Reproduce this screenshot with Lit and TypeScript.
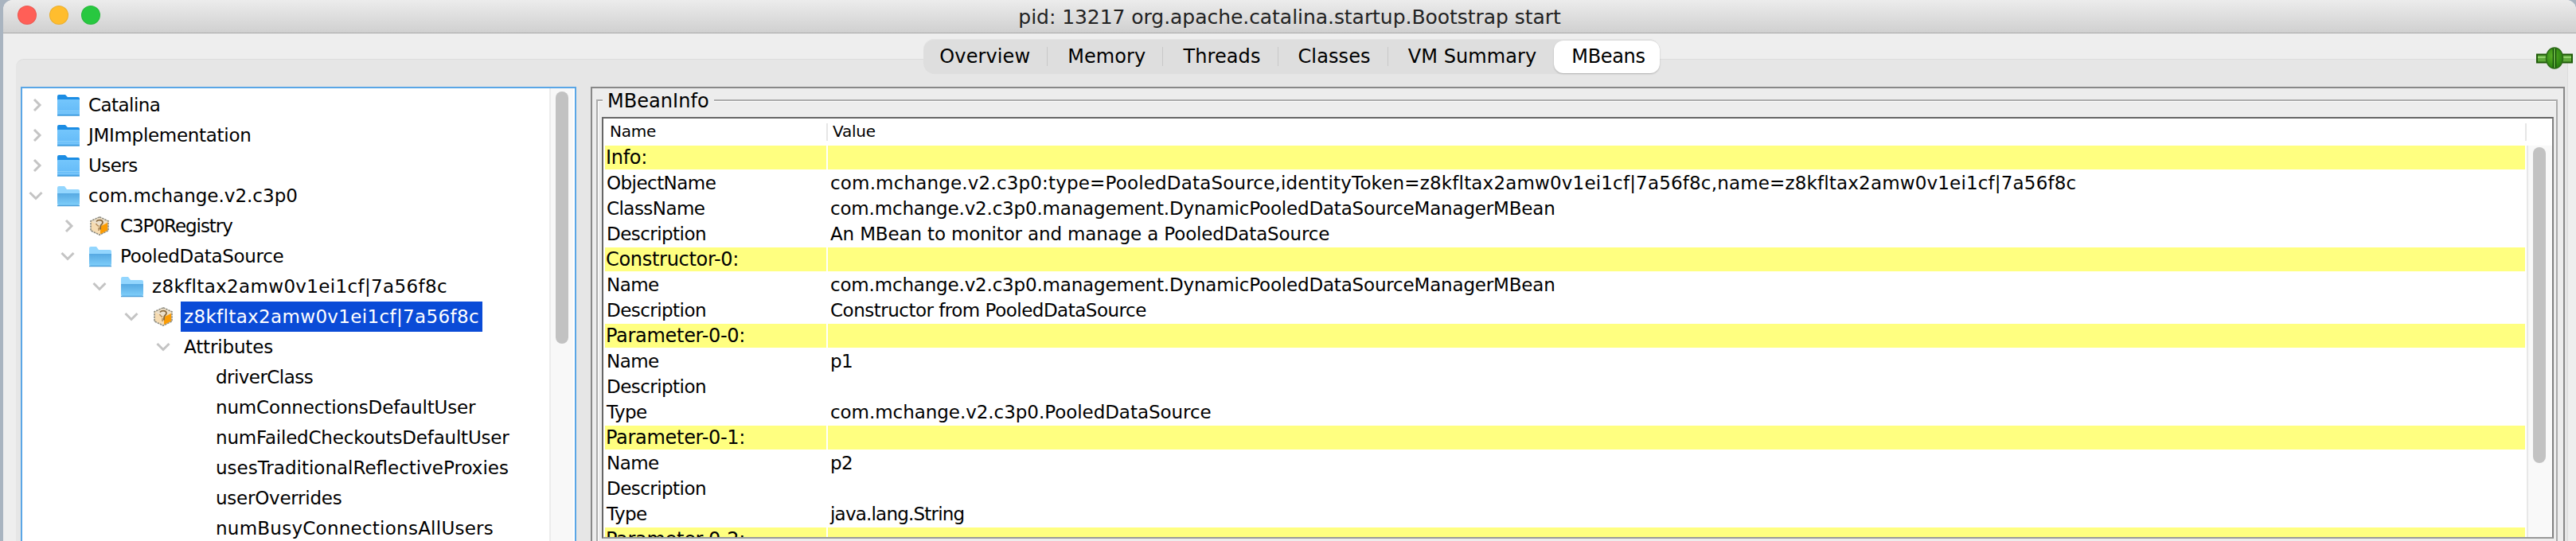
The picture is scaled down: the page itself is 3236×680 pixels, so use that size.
import { LitElement, html, css, svg } from 'lit';
import { customElement } from 'lit/decorators.js';
import { classMap } from 'lit/directives/class-map.js';

// ls = letter-spacing in px, the fallback font's widths differ from the original's per string
type TreeNode = { level: number; label: string; ls: number; twist?: 'open' | 'closed'; icon?: 'folder' | 'folder-open' | 'bean'; selected?: boolean };
type InfoRow = { name: string; value?: string; ls?: number };

const HASH = 'z8kfltax2amw0v1ei1cf|7a56f8c';

const TREE: TreeNode[] = [
  { level: 0, label: 'Catalina', ls: -0.55, twist: 'closed', icon: 'folder' },
  { level: 0, label: 'JMImplementation', ls: -0.3, twist: 'closed', icon: 'folder' },
  { level: 0, label: 'Users', ls: -0.55, twist: 'closed', icon: 'folder' },
  { level: 0, label: 'com.mchange.v2.c3p0', ls: 0, twist: 'open', icon: 'folder-open' },
  { level: 1, label: 'C3P0Registry', ls: -1.05, twist: 'closed', icon: 'bean' },
  { level: 1, label: 'PooledDataSource', ls: -0.3, twist: 'open', icon: 'folder-open' },
  { level: 2, label: HASH, ls: 0.35, twist: 'open', icon: 'folder-open' },
  { level: 3, label: HASH, ls: 0.35, twist: 'open', icon: 'bean', selected: true },
  { level: 4, label: 'Attributes', ls: -0.15, twist: 'open' },
  { level: 5, label: 'driverClass', ls: -0.55 },
  { level: 5, label: 'numConnectionsDefaultUser', ls: -0.15 },
  { level: 5, label: 'numFailedCheckoutsDefaultUser', ls: -0.2 },
  { level: 5, label: 'usesTraditionalReflectiveProxies', ls: 0 },
  { level: 5, label: 'userOverrides', ls: -0.25 },
  { level: 5, label: 'numBusyConnectionsAllUsers', ls: 0.25 },
];

const INFO: InfoRow[] = [
  { name: 'Info:' },
  { name: 'ObjectName', value: `com.mchange.v2.c3p0:type=PooledDataSource,identityToken=${HASH},name=${HASH}`, ls: 0.17 },
  { name: 'ClassName', value: 'com.mchange.v2.c3p0.management.DynamicPooledDataSourceManagerMBean', ls: -0.18 },
  { name: 'Description', value: 'An MBean to monitor and manage a PooledDataSource', ls: -0.15 },
  { name: 'Constructor-0:' },
  { name: 'Name', value: 'com.mchange.v2.c3p0.management.DynamicPooledDataSourceManagerMBean', ls: -0.18 },
  { name: 'Description', value: 'Constructor from PooledDataSource', ls: -0.5 },
  { name: 'Parameter-0-0:' },
  { name: 'Name', value: 'p1' },
  { name: 'Description', value: '' },
  { name: 'Type', value: 'com.mchange.v2.c3p0.PooledDataSource', ls: -0.05 },
  { name: 'Parameter-0-1:' },
  { name: 'Name', value: 'p2' },
  { name: 'Description', value: '' },
  { name: 'Type', value: 'java.lang.String', ls: -0.8 },
  { name: 'Parameter-0-2:' },
];

const TABS = ['Overview', 'Memory', 'Threads', 'Classes', 'VM Summary', 'MBeans'];

const chevronClosed = html`<svg class="chev" width="18" height="20" viewBox="0 0 18 20"><path d="M5 3l7 7-7 7" fill="none" stroke="#c4c4c4" stroke-width="3"/></svg>`;
const chevronOpen = html`<svg class="chev open" width="18" height="20" viewBox="0 0 18 20"><path d="M1.5 6l7.5 7.500 7.500-7.500" fill="none" stroke="#c4c4c4" stroke-width="3"/></svg>`;

const folderClosed = html`<svg width="30" height="28" viewBox="0 0 30 28">
  <defs><linearGradient id="fc" x1="0" y1="0" x2="0" y2="1"><stop offset="0" stop-color="#74c6fc"/><stop offset="1" stop-color="#62b9f7"/></linearGradient></defs>
  <path d="M1 3a2 2 0 0 1 2-2h8l3 3h13a2 2 0 0 1 2 2v5H1z" fill="#1c8de4"/>
  <rect x="1" y="7" width="28" height="20" rx="1" fill="url(#fc)"/>
  <path d="M1 21.500h28M1 24h28" stroke="#8ad0fb" stroke-width="1"/>
  <path d="M1 27h28" stroke="#3d98d8" stroke-width="1.500"/>
</svg>`;

const folderOpen = html`<svg width="30" height="28" viewBox="0 0 30 28">
  <defs><linearGradient id="fo" x1="0" y1="0" x2="0" y2="1"><stop offset="0" stop-color="#56a9e2"/><stop offset="1" stop-color="#7fcefa"/></linearGradient></defs>
  <path d="M1 4a2 2 0 0 1 2-2h7l3 4h14a2 2 0 0 1 2 2v8H1z" fill="#93d6fe"/>
  <path d="M1 11h28v13a2 2 0 0 1-2 2H3a2 2 0 0 1-2-2z" fill="url(#fo)"/>
  <path d="M1 26.500h28" stroke="#4c9fd8" stroke-width="1.500"/>
</svg>`;

const beanIcon = html`<svg class="bean" width="26" height="24" viewBox="0 0 26 24">
  <path d="M13 .8l11 5v12l-11 5.400-11-5.400v-12z" fill="#f6dcb2" stroke="#8a8a80" stroke-width="1.600" stroke-dasharray="2.500 1"/>
  <path d="M3 6.500L13 1.800l10 4.700-10 5z" fill="#ece0cc"/>
  <path d="M14 12.500l9-4.500v9.500l-9 4.700z" fill="#fb9c04"/>
  <path d="M9 6.500c2-2.500 7-2.500 8 .5 .5 2-1.500 3-2.500 4.500-.7 1.200-.5 3.500-.5 5" fill="none" stroke="#8a6a3c" stroke-width="1.800"/>
  <path d="M8.500 9c1 2 2.500 3 3.500 3.500M12 14v4" fill="none" stroke="#b08a5a" stroke-width="1.500"/>
</svg>`;

const connectIcon = svg`
  <defs><radialGradient id="ball" cx=".4" cy=".4" r=".7"><stop offset="0" stop-color="#5cb028"/><stop offset="1" stop-color="#1f7a0a"/></radialGradient></defs>
  <rect x="1" y="9.500" width="44" height="10" fill="#5fa83a" stroke="#1e5a08" stroke-width="2"/>
  <path d="M2 13h42" stroke="#8fd06a" stroke-width="2"/>
  <ellipse cx="23" cy="14" rx="10.500" ry="13" fill="url(#ball)" stroke="#2d6a18" stroke-width="1.500"/>
  <path d="M21.500 2v24M24.500 2v24" stroke="#0f4a04" stroke-width="1.500"/>
  <path d="M23 2v24" stroke="#8fd06a" stroke-width="1"/>
`;

@customElement('app-root')
export class AppRoot extends LitElement {
  static styles = css`
    :host {
      display: block;
      height: 680px;
      overflow: hidden;
      background: #a9b4c0;
      font-family: "DejaVu Sans", sans-serif;
      color: #000;
    }
    .window {
      margin-left: 4px;
      height: 680px;
      background: #eeeeee;
      border-radius: 12px 12px 0 0;
      display: flex;
      flex-direction: column;
      overflow: hidden;
    }
    .titlebar {
      flex: 0 0 41px;
      display: flex;
      align-items: center;
      justify-content: center;
      background: linear-gradient(#ececec, #d0d0d0);
      border-bottom: 1px solid #a9a9a9;
      position: relative;
    }
    .title {
      font-size: 25px;
      letter-spacing: -0.05px;
      color: #222;
      transform: translateY(1px);
    }
    .lights {
      position: absolute;
      left: 18px;
      top: 7px;
      display: flex;
      gap: 16px;
    }
    .lights i {
      width: 24px;
      height: 24px;
      border-radius: 50%;
      box-sizing: border-box;
      border: 1px solid rgba(0, 0, 0, 0.08);
    }
    .red { background: #ff5f57; }
    .amber { background: #ffbd2e; }
    .green { background: #28c840; }
    .tabline {
      display: grid;
      grid-template-columns: 1fr auto 1fr;
      align-items: center;
      height: 44px;
      margin: 7px 0 -19px;
      padding-left: 5px;
      position: relative;
      z-index: 1;
    }
    .tabs {
      grid-column: 2;
      display: flex;
      align-items: center;
      height: 44px;
      border-radius: 14px;
      background: #dedede;
      box-shadow: inset 0 1px 0 #e4e4e4;
    }
    .tab {
      font-size: 24px;
      letter-spacing: 0.1px;
      height: 44px;
      line-height: 44px;
      padding: 0 22px 0 25px;
      position: relative;
    }
    .tab:first-child { padding-left: 20px; }
    .tab:not(.on):not(:nth-last-child(2))::after {
      content: "";
      position: absolute;
      right: 0;
      top: 10px;
      height: 24px;
      width: 1px;
      background: #c8c8c8;
    }
    .tab.on {
      background: #fff;
      border-radius: 12px;
      height: 41px;
      line-height: 41px;
      padding: 0 18px 0 22px;
      letter-spacing: -0.35px;
      box-shadow: 0 1px 2px rgba(0, 0, 0, 0.22);
    }
    .plug {
      grid-column: 3;
      justify-self: end;
      margin-right: 4px;
      margin-top: 4px;
      display: block;
    }
    .pane {
      flex: 1;
      min-height: 0;
      margin: 0 10px 0 16px;
      padding: 34px 3px 0 6px;
      background: #e6e6e6;
      border-top: 1px solid #dcdcdc;
      border-right: 1px solid #dcdcdc;
      border-radius: 10px 0 0 0;
      display: flex;
      gap: 18px;
      box-sizing: border-box;
    }
    .tree {
      flex: 0 0 698px;
      box-sizing: border-box;
      border: 2px solid #5aa6e6;
      border-bottom: none;
      background: #fff;
      display: flex;
    }
    .rows {
      flex: 1;
      padding-top: 2px;
      font-size: 23px;
    }
    .node {
      height: 38px;
      display: flex;
      align-items: center;
      padding-left: calc(var(--level) * 40px);
      white-space: nowrap;
    }
    .twist { flex: 0 0 43px; display: flex; }
    .chev { margin-left: 10px; }
    .chev.open { margin-left: 8px; }
    .icon { flex: 0 0 30px; margin-right: 10px; display: flex; }
    .bean { margin-left: 1px; }
    .label {
      margin-left: -4px;
      padding: 0 4px;
      height: 38px;
      line-height: 38px;
    }
    .label.sel { background: #0a4bd7; color: #fff; }
    .vbar {
      flex: 0 0 30px;
      margin-right: 2px;
      box-sizing: border-box;
      background: #f8f8f8;
      border-left: 2px solid #ececec;
      padding: 4px 6px 0;
    }
    .thumb {
      width: 16px;
      border-radius: 8px;
      background: #c2c2c2;
    }
    .details {
      flex: 1;
      min-width: 0;
      box-sizing: border-box;
      border: 2px solid #888;
      border-bottom: none;
      background: #ededed;
      padding: 14px 7px 0 5px;
    }
    .group {
      height: 100%;
      box-sizing: border-box;
      border: 2px solid #ababab;
      border-bottom: none;
      box-shadow: inset 1px 1px 0 #fff;
      padding: 0 3px 0 5px;
    }
    .legend {
      width: fit-content;
      height: 20px;
      margin: -15px 0 0 1px;
      padding: 0 6px;
      background: #ededed;
      font-size: 24px;
      line-height: 30px;
      letter-spacing: 0.05px;
    }
    .table {
      margin-top: 15px;
      height: 530px;
      box-sizing: border-box;
      border: 2px solid #666;
      border-right-color: #808080;
      border-bottom-color: #999;
      background: #fff;
      padding-left: 2px;
      display: flex;
      flex-direction: column;
      overflow: hidden;
    }
    .head {
      flex: 0 0 34px;
      display: grid;
      grid-template-columns: 278px 2132px 1fr;
      column-gap: 2px;
      font-size: 20px;
      letter-spacing: -0.2px;
      padding-top: 6px;
      box-sizing: border-box;
    }
    .head div {
      height: 22px;
      line-height: 20px;
      padding-left: 6px;
      box-shadow: 2px 0 0 #e6e6e6;
    }
    .head div:last-child { box-shadow: none; }
    .body { flex: 1; min-height: 0; display: flex; overflow: hidden; }
    .cells { flex: 0 0 2412px; }
    .row {
      display: grid;
      grid-template-columns: 278px 2132px;
      column-gap: 2px;
      height: 30px;
      margin-bottom: 2px;
      line-height: 30px;
      font-size: 23px;
      letter-spacing: -0.55px;
      white-space: nowrap;
    }
    .row > div { padding-left: 3px; }
    .row > div:first-child { padding-left: 2px; }
    .row.section > div {
      background: #ffff80;
      padding-left: 1px;
      font-size: 24px;
      letter-spacing: -0.3px;
    }
    .sbar {
      flex: 0 0 32px;
      box-sizing: border-box;
      margin-left: 2px;
      margin-right: 2px;
      background: #f9f9f9;
      border-left: 2px solid #e8e8e8;
      padding: 2px 6px 0;
    }
  `;

  renderNode(n: TreeNode) {
    return html`<div class="node" style="--level:${n.level}">
      <div class="twist">${n.twist === 'closed' ? chevronClosed : n.twist === 'open' ? chevronOpen : ''}</div>
      ${n.icon ? html`<div class="icon">${n.icon === 'folder' ? folderClosed : n.icon === 'folder-open' ? folderOpen : beanIcon}</div>` : ''}
      <span class=${classMap({ label: true, sel: !!n.selected })} style="letter-spacing:${n.ls}px">${n.label}</span>
    </div>`;
  }

  renderRow(r: InfoRow) {
    const section = r.value === undefined;
    return html`<div class=${classMap({ row: true, section })}>
      <div>${r.name}</div><div style=${r.ls === undefined ? '' : `letter-spacing:${r.ls}px`}>${r.value ?? ''}</div>
    </div>`;
  }

  render() {
    return html`
      <div class="window">
        <div class="titlebar">
          <div class="lights"><i class="red"></i><i class="amber"></i><i class="green"></i></div>
          <div class="title">pid: 13217 org.apache.catalina.startup.Bootstrap start</div>
        </div>
        <div class="tabline">
          <div class="tabs">
            ${TABS.map((t) => html`<div class=${classMap({ tab: true, on: t === 'MBeans' })}>${t}</div>`)}
          </div>
          <svg class="plug" width="46" height="28" viewBox="0 0 46 28">${connectIcon}</svg>
        </div>
        <div class="pane">
          <div class="tree">
            <div class="rows">${TREE.map((n) => this.renderNode(n))}</div>
            <div class="vbar"><div class="thumb" style="height:317px"></div></div>
          </div>
          <div class="details">
            <div class="group">
              <div class="legend">MBeanInfo</div>
              <div class="table">
                <div class="head"><div>Name</div><div>Value</div><div></div></div>
                <div class="body">
                  <div class="cells">${INFO.map((r) => this.renderRow(r))}</div>
                  <div class="sbar"><div class="thumb" style="height:397px"></div></div>
                </div>
              </div>
            </div>
          </div>
        </div>
      </div>
    `;
  }
}
